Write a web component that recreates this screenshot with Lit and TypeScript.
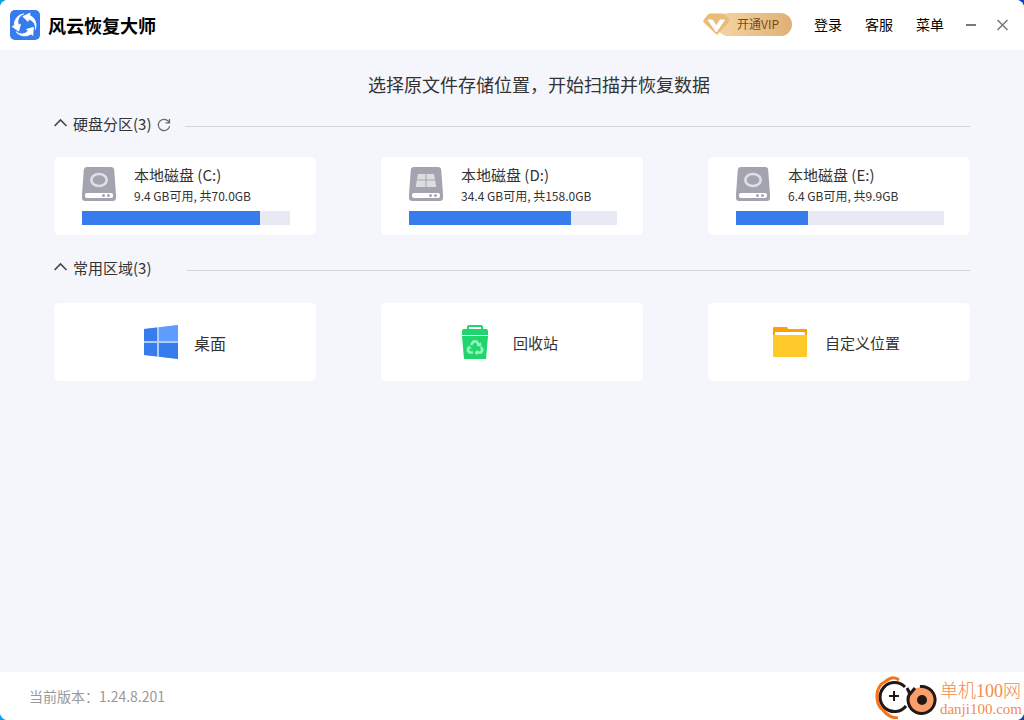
import { LitElement, html, svg, css } from "lit";
import { customElement, property } from "lit/decorators.js";

const reset = css`
  * { box-sizing: border-box; }
  svg { display: block; flex: none; }
  button { font: inherit; color: inherit; background: none; border: 0; padding: 0; cursor: pointer; }
  a { color: inherit; text-decoration: none; }
`;

const logoArrow = svg`<path d="M25.300 19.500A11 11 0 0 0 19.600 5.200L20.200 3 12.800 6.500 18 11.500l.6-2.200A8.500 8.500 0 0 1 25.300 19.500z"/>`;

@customElement("section-head")
export class SectionHead extends LitElement {
  @property() label = "";
  @property({ type: Boolean }) refresh = false;
  static styles = [reset, css`
    :host { display: flex; align-items: center; height: 24px; color: #333; font-size: 15px; }
    .toggle { display: flex; align-items: center; gap: 5px; line-height: 24px; white-space: nowrap; }
    .refresh { margin: 2px 0 0 6px; }
    .rule { flex: 1; height: 1px; margin: 4px 0 0 14px; background: #d3d5da; }
    .far { margin-left: 36px; }
  `];
  render() {
    return html`
      <button class="toggle" type="button" aria-expanded="true">
        <svg width="14" height="12" viewBox="0 0 14 12" fill="none" stroke="#444" stroke-width="1.600"><path d="M.6 8 6.500 2l6 6"/></svg>
        <span>${this.label}</span>
      </button>
      ${this.refresh ? html`<button class="refresh" type="button" aria-label="刷新">
        <svg width="14" height="14" viewBox="0 0 14 14" fill="none" stroke="#666" stroke-width="1.200"><path d="M12.600 8.200A5.700 5.700 0 1 1 11.300 3.200L12.400 4.600M12.500 1v3.900H8.600"/></svg>
      </button>` : ""}
      <span class="rule ${this.refresh ? "" : "far"}"></span>`;
  }
}

@customElement("disk-card")
export class DiskCard extends LitElement {
  @property() name = "";
  @property() info = "";
  @property({ type: Number }) used = 0;
  @property({ type: Boolean }) system = false;
  static styles = [reset, css`
    :host { display: block; }
    .card { display: block; width: 100%; padding: 7px 26px 10px 28px; background: #fff; border-radius: 5px; text-align: left; color: #333; }
    .top { display: flex; gap: 18px; }
    .icon { margin-top: 3px; }
    .name { display: block; font-size: 15px; line-height: 22px; }
    .info { display: block; font-size: 12px; line-height: 20px; white-space: nowrap; }
    .bar { display: block; height: 14px; margin-top: 5px; background: #e7eaf3; }
    .fill { display: block; height: 100%; background: #367cec; }
  `];
  render() {
    return html`<button class="card" type="button">
      <span class="top">
        <svg class="icon" width="34" height="34" viewBox="0 0 34 34">
          <path d="M5 0h24q3 0 3.200 3L34 27v4q0 3-3 3H3q-3 0-3-3v-4L1.800 3Q2 0 5 0z" fill="#a4a4b1"/>
          ${this.system
            ? svg`<path d="M9 7h7.500v5.500H8zM17.500 7H25l1 5.500h-8.500zM7.700 13.500h8.800V20H6.700zM17.500 13.500h8.700L27.200 20h-9.700z" fill="#dcdde1"/>`
            : svg`<ellipse cx="17" cy="13" rx="7.700" ry="6" fill="none" stroke="#dfe0e4" stroke-width="2.600"/>`}
          <rect x="3" y="26" width="28" height="5" rx="2" fill="#fff"/>
          <circle cx="21.500" cy="28.500" r="1.500" fill="#a4a4b1"/><circle cx="26.500" cy="28.500" r="1.500" fill="#a4a4b1"/>
        </svg>
        <span><span class="name">${this.name}</span><span class="info">${this.info}</span></span>
      </span>
      <span class="bar"><span class="fill" style="width:${this.used}%"></span></span>
    </button>`;
  }
}

@customElement("app-root")
export class AppRoot extends LitElement {
  static styles = [reset, css`
    :host { display: block; background: linear-gradient(90deg, #0d9fe8, #0b46b8); font-family: "Noto Sans CJK SC", sans-serif; }
    .window { display: flex; flex-direction: column; min-height: 100vh; background: #f5f6fb; border-radius: 8px; overflow: hidden; }
    header { display: flex; align-items: center; height: 50px; padding: 0 15px 0 10px; background: #fff; }
    h1 { margin: 0 auto 0 8px; font-size: 18px; line-height: 28px; color: #000; }
    .vip { display: flex; align-items: center; margin-right: 22px; }
    .gem { z-index: 1; margin-right: -14px; }
    .pill { height: 23px; padding: 0 12px 0 20px; border-radius: 12px; background: linear-gradient(90deg, #f3d6a3, #e0b076); color: #7a4a16; font-size: 12px; line-height: 22px; }
    .vip, nav { padding-bottom: 2px; }
    .pill { padding-right: 13px; }
    nav { display: flex; gap: 23px; font-size: 14px; line-height: 22px; color: #000; }
    .win { display: flex; align-items: center; gap: 20px; margin-left: 21px; }
    main { flex: 1; padding: 20px 54px; }
    h2 { margin: 0 -54px 14px 0; text-align: center; font-size: 18px; line-height: 28px; font-weight: 400; color: #333; }
    .grid { display: grid; grid-template-columns: repeat(3, minmax(0, 1fr)); gap: 65px; margin: 21px 0; }
    .places { margin-top: 23px; }
    .tile { display: flex; align-items: center; justify-content: center; gap: 18px; height: 78px; padding: 0 5px 0 0; background: #fff; border-radius: 5px; font-size: 15px; line-height: 24px; color: #333; }
    .large { gap: 16px; padding-right: 0; font-size: 16px; }
    .tile span { padding-top: 2px; }
    footer { display: flex; align-items: center; justify-content: space-between; height: 48px; padding: 0 2px 0 29px; background: #fff; color: #999; font-size: 14px; }
    .site { display: flex; align-items: center; gap: 2px; color: #f58b4c; font-family: "Liberation Serif", "Noto Sans CJK SC", serif; }
    .site-text { padding-top: 6px; }
    .site-name { display: block; font-size: 18px; line-height: 20px; font-weight: 300; }
    .site-url { display: block; font-size: 15px; line-height: 17px; }
  `];
  render() {
    return html`<div class="window">
      <header>
        <svg width="30" height="30" viewBox="0 0 30 30"><rect width="30" height="30" rx="5" fill="#367cec"/>
          <g fill="#fff" stroke="#fff" stroke-width=".7">${logoArrow}<g transform="rotate(120 15 15)">${logoArrow}</g><g transform="rotate(240 15 15)">${logoArrow}</g></g></svg>
        <h1>风云恢复大师</h1>
        <button class="vip" type="button">
          <svg class="gem" width="28" height="25" viewBox="0 0 28 25"><path d="M5 2.500q1-1 2-1h13q1 0 2 1l4 4.500q1 1.500 0 3L14 23 .8 10.500q-1-1.500 0-3z" fill="#e9bd77"/><path d="M5 8h4.500l3.800 6L17 8h4.500l-8.200 12z" fill="#fff" stroke="#fff" stroke-linejoin="round"/></svg>
          <span class="pill">开通VIP</span>
        </button>
        <nav><a href="#login">登录</a><a href="#service">客服</a><a href="#menu">菜单</a></nav>
        <div class="win">
          <button type="button" aria-label="最小化"><svg width="12" height="12" viewBox="0 0 12 12"><path d="M1 6h10" stroke="#777781" stroke-width="2"/></svg></button>
          <button type="button" aria-label="关闭"><svg width="12" height="12" viewBox="0 0 12 12"><path d="m.5 1 10 10M10.500 1l-10 10" stroke="#777781" stroke-width="1.500"/></svg></button>
        </div>
      </header>
      <main>
        <h2>选择原文件存储位置，开始扫描并恢复数据</h2>
        <section-head label="硬盘分区(3)" refresh></section-head>
        <div class="grid">
          <disk-card name="本地磁盘 (C:)" info="9.4 GB可用, 共70.0GB" used="85.6"></disk-card>
          <disk-card name="本地磁盘 (D:)" info="34.4 GB可用, 共158.0GB" used="77.9" system></disk-card>
          <disk-card name="本地磁盘 (E:)" info="6.4 GB可用, 共9.9GB" used="34.6"></disk-card>
        </div>
        <section-head label="常用区域(3)"></section-head>
        <div class="grid places">
          <button class="tile large" type="button">
            <svg width="34" height="34" viewBox="0 0 34 34"><path d="M0 4 34 0v34L0 30z" fill="#aecbfb"/><path d="M0 4l13-1.500V16H0zM0 18h13v13.500L0 30zM15 18h19v16l-19-2.300z" fill="#367cec"/><path d="M15 2.300 34 0v16H15z" fill="#609cff"/></svg>
            <span>桌面</span>
          </button>
          <button class="tile" type="button">
            <svg width="34" height="34" viewBox="3 0 34 34"><path d="M1 10V6q0-2 2-2h3V2q0-2 2-2h12q2 0 2 2v2h3q2 0 2 2v4zM8 4h12V2H8zM1 11h26l-2 23H3z" fill="#1fd66c" fill-rule="evenodd" transform="translate(3)"/>
              <g fill="none" stroke="#9df3c0" stroke-width="2.600"><path d="m13 20 2.500-3.500h3L21 20M10.500 22.500l-.5 3 1.500 2H15M23 22l1.500 3-1.500 2.500h-4"/></g><path d="m18.500 21 5 .5-.5-4.500zM8.500 23.500l2.500-3 3 3zM19.500 24.500v6l-3-3z" fill="#9df3c0"/></svg>
            <span>回收站</span>
          </button>
          <button class="tile" type="button">
            <svg width="34" height="34" viewBox="0 0 34 34"><path d="M0 10V3q0-1 1-1h13l1 2h18q1 0 1 1v5z" fill="#ff9f05"/><path d="M2 12V8q0-1 1-1h28q1 0 1 1v4z" fill="#fff"/><path d="M0 10h34v21q0 1-1 1H1q-1 0-1-1z" fill="#ffc929"/></svg>
            <span>自定义位置</span>
          </button>
        </div>
      </main>
      <footer>
        <span>当前版本：1.24.8.201</span>
        <a class="site" href="#site">
          <svg width="63" height="46" viewBox="0 0 63 46" fill="none">
            <path d="M24 7Q18 2 11 8 1 13 2 25 3 34 8 37q6 8 15 8" stroke="#f97316" stroke-width="3"/>
            <path d="M30 14a14.500 14.500 0 1 0 1 19" stroke="#231815" stroke-width="3"/>
            <path d="M19 18v10M14 23h10" stroke="#231815" stroke-width="2"/>
            <circle cx="47" cy="27" r="13" fill="#f9a06a"/>
            <path d="M45 13.500a13.500 13.500 0 1 1-9 5M32 15l3 6 5-6" stroke="#231815" stroke-width="3"/>
            <circle cx="47" cy="27" r="5" fill="#231815"/>
          </svg>
          <span class="site-text"><span class="site-name">单机100网</span><span class="site-url">danji100.com</span></span>
        </a>
      </footer>
    </div>`;
  }
}
